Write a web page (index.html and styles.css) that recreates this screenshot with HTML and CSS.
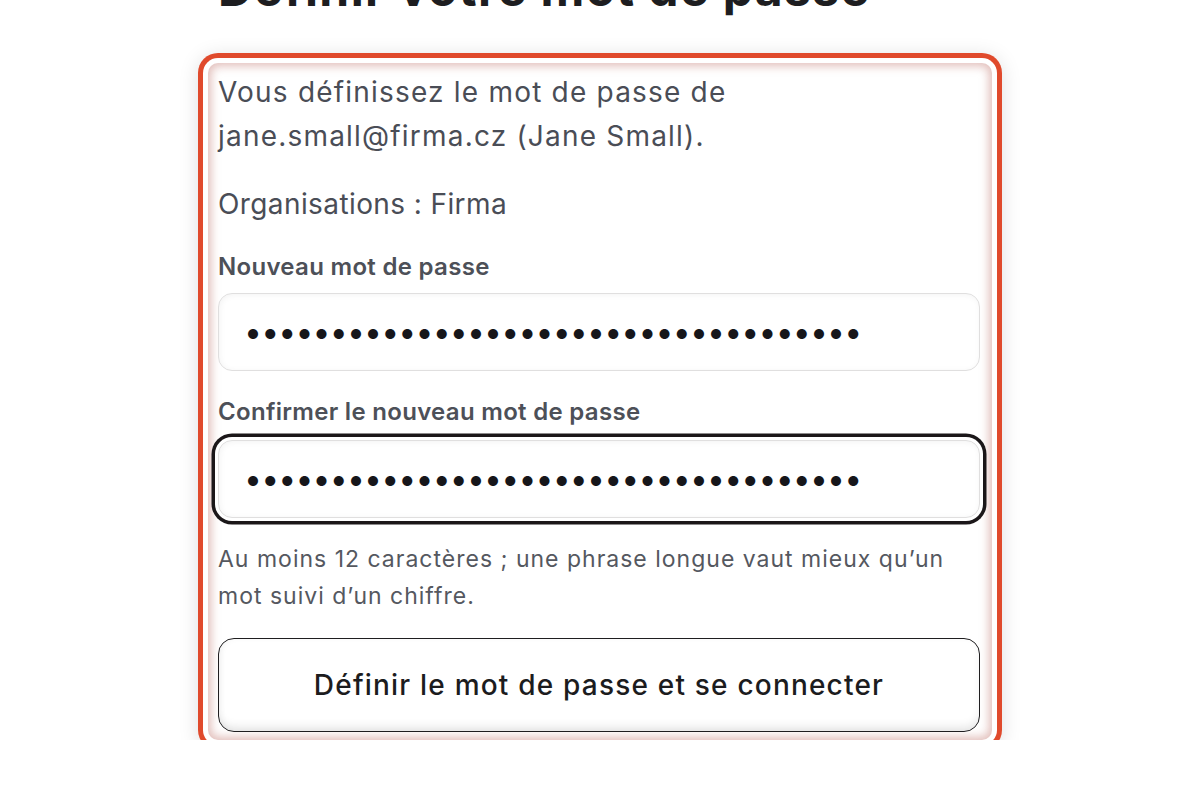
FILE: index.html
```html
<!DOCTYPE html>
<html lang="fr">
<head>
<meta charset="utf-8">
<title>Définir votre mot de passe</title>
<link rel="stylesheet" href="styles.css">
</head>
<body>
<main class="page">
  <h1 class="title">Définir votre mot de passe</h1>
  <form class="card">
    <p class="intro">Vous définissez le mot de passe de jane.small@firma.cz (Jane Small).</p>
    <p class="org">Organisations : Firma</p>
    <label class="label" for="pw1">Nouveau mot de passe</label>
    <input class="field" id="pw1" type="password" value="abcdefghijklmnopqrstuvwxyz0123456789">
    <label class="label label-second" for="pw2">Confirmer le nouveau mot de passe</label>
    <input class="field field-focus" id="pw2" type="password" value="abcdefghijklmnopqrstuvwxyz0123456789">
    <p class="hint">Au moins 12 caractères ; une phrase longue vaut mieux qu’un mot suivi d’un chiffre.</p>
    <button class="submit" type="button">Définir le mot de passe et se connecter</button>
  </form>
</main>
</body>
</html>
```
FILE: styles.css
```css
* { box-sizing: border-box; }
html, body { margin: 0; padding: 0; background: #ffffff; }
body {
  font-family: Inter, "Noto Sans", "Liberation Sans", sans-serif;
  color: #4b4e57;
  overflow: hidden;
}
.page {
  width: 784px;
  margin: 0 auto;
}
.title {
  margin: -40px 0 45px 10px;
  font-size: 48px;
  line-height: 1.2;
  font-weight: 700;
  color: #1d1d20;
  letter-spacing: 1.4px;
}
.card {
  display: block;
  height: 677px;
  padding: 7px 12px 8px 10px;
  border-radius: 10px;
  background: #ffffff;
  box-shadow:
    inset 0 0 10px 3px rgba(205, 145, 138, 0.6),
    0 0 0 5px #ffffff,
    0 0 0 10px #e04a2c,
    0 3px 20px 10px rgba(0, 0, 0, 0.13);
}
.intro, .org {
  margin: 0;
  font-size: 28px;
  line-height: 1.6;
  color: #4a4d56;
  letter-spacing: 1.2px;
}
.org { margin-top: 23px; letter-spacing: 0.4px; }
.label {
  display: block;
  margin: 22px 0 8px;
  font-size: 24px;
  line-height: 36px;
  font-weight: 600;
  color: #4d5058;
  letter-spacing: 0.3px;
}
.label-second { margin: 23px 0 10px; }
.field {
  display: block;
  width: 100%;
  height: 78px;
  margin: 0;
  padding: 0 25px;
  border: 1.5px solid #e0dfdf;
  border-radius: 14px;
  background: #ffffff;
  box-shadow: inset 1px 1px 6px rgba(0, 0, 0, 0.05);
  font-family: Inter, "Noto Sans", sans-serif;
  font-size: 32px;
  letter-spacing: -0.85px;
  color: #16161a;
  outline: none;
}
.field-focus {
  box-shadow:
    inset 1px 1px 6px rgba(0, 0, 0, 0.05),
    0 0 0 3px #ffffff,
    0 0 0 6.5px #1b1719;
}
.hint {
  margin: 23px 0 0;
  font-size: 23px;
  line-height: 37px;
  color: #55585f;
  letter-spacing: 1px;
}
.submit {
  display: flex;
  align-items: center;
  justify-content: center;
  width: 100%;
  height: 94px;
  margin: 23px 0 0;
  padding: 0;
  border: 1.5px solid #1f1e20;
  border-radius: 16px;
  background: #ffffff;
  box-shadow: inset 0 -7px 10px -3px rgba(0, 0, 0, 0.10), inset 3px 0 8px -4px rgba(0, 0, 0, 0.08);
  font-family: Inter, "Noto Sans", sans-serif;
  font-size: 28px;
  font-weight: 500;
  color: #1c1c1e;
  letter-spacing: 1.2px;
  cursor: pointer;
}
```
